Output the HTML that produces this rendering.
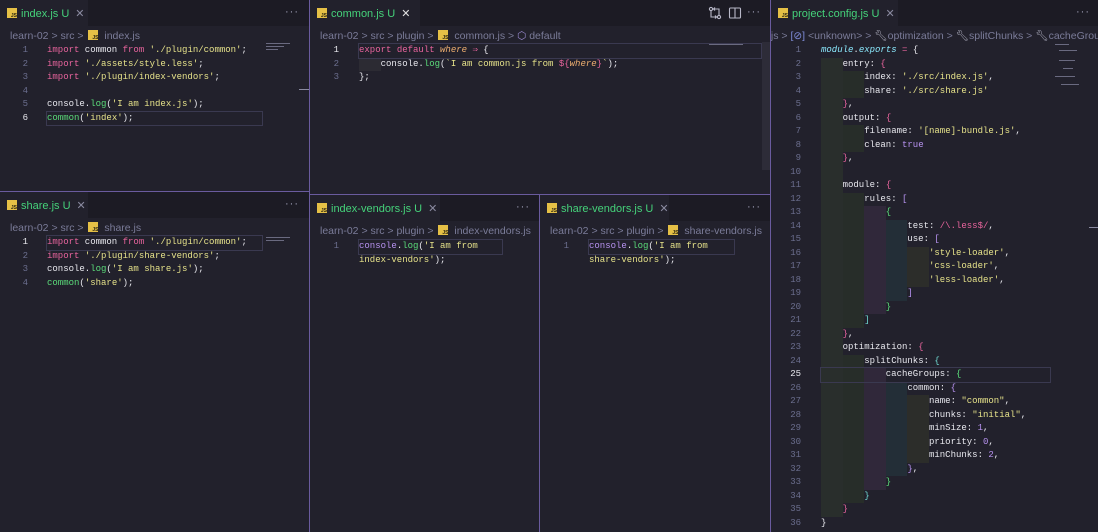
<!DOCTYPE html>
<html><head><meta charset="utf-8"><style>
*{margin:0;padding:0;box-sizing:border-box}
body{width:1098px;height:532px;background:#22212c;position:relative;overflow:hidden;font-family:"Liberation Sans",sans-serif}
.pane{position:absolute;background:#22212c;overflow:hidden}
.tabs{position:absolute;left:0;top:0;right:0;height:26px;background:#1c1b24}
.tab{position:absolute;left:0;top:0;height:26px;background:#22212c;font-size:11px;color:#45d27a;line-height:28px;padding-left:21px;white-space:nowrap}
.tab .x{color:#8a8aa0;margin-left:6px;font-size:11px}
.tab .x.w{color:#e0e0e0}
.js{position:absolute;width:10px;height:10px;background:#e5c046;}
.js:after{content:"JS";position:absolute;right:0;bottom:-1px;font-size:5px;font-weight:bold;color:#2a2410;line-height:6px}
.tab .js{left:7px;top:8px}
.dots{position:absolute;top:0;height:26px;line-height:24px;color:#a0a0b8;font-size:11px;letter-spacing:1px}
.bc{position:absolute;left:10px;top:28px;height:15px;font-size:10.5px;color:#7b7c99;line-height:16px;white-space:nowrap}
.bc .js{position:relative;display:inline-block;top:1px;margin:0 3px 0 2px}
.code{position:absolute;top:44px;left:0;right:0;font-family:"Liberation Mono",monospace;font-size:9px;line-height:13.5px;white-space:normal;color:#e8e8ee}
.src>div{white-space:pre;height:13.5px}
.ln{position:absolute;left:0;text-align:right;color:#6b6e8e}
.ln div.a{color:#e8e8ee}
.src{position:absolute}
.k{color:#e8649d}.s{color:#e6e28a}.f{color:#5bdc7a}.n{color:#b792f0}.it{font-style:italic;color:#f0b070}
.cur{outline:1px solid #3a3950}
.vb{position:absolute;background:#6a5b9e}
i{display:inline-block;width:21.6px;height:13.5px;vertical-align:top}
.l1{background:#292e2c}.l2{background:#272d29}.l3{background:#30283a}.l4{background:#232e37}.l5{background:#2c2d2a}
.mm{position:absolute;height:1px;background:#6a6a80}
</style></head><body>

<div class="pane" style="left:0;top:0;width:309px;height:191px">
  <div class="tabs"></div>
  <div class="tab" style="width:88px"><span class="js"></span>index.js U<span class="x">✕</span></div>
  <div class="dots" style="left:285px">···</div>
  <div class="bc">learn-02 &gt; src &gt; <span class="js"></span> index.js</div>
  <div class="code">
    <div class="ln" style="width:28px"><div>1</div><div>2</div><div>3</div><div>4</div><div>5</div><div class="a">6</div></div>
    <div class="src" style="left:47px"><div><span class="k">import</span> common <span class="k">from</span> <span class="s">'./plugin/common'</span>;</div><div><span class="k">import</span> <span class="s">'./assets/style.less'</span>;</div><div><span class="k">import</span> <span class="s">'./plugin/index-vendors'</span>;</div><div> </div><div>console.<span class="f">log</span>(<span class="s">'I am index.js'</span>);</div><div class="cur" style="width:215px"><span class="f">common</span>(<span class="s">'index'</span>);</div></div>
  </div>
  <div class="mm" style="left:266px;top:43px;width:24px"></div><div class="mm" style="left:266px;top:46px;width:18px"></div><div class="mm" style="left:266px;top:49px;width:12px"></div>
  <div style="position:absolute;left:299px;top:89px;width:10px;height:1px;background:#8a8aa0"></div>
</div>
<div class="vb" style="left:0;top:191px;width:309px;height:1px"></div>

<div class="pane" style="left:0;top:192px;width:309px;height:340px">
  <div class="tabs"></div>
  <div class="tab" style="width:88px"><span class="js"></span>share.js U<span class="x">✕</span></div>
  <div class="dots" style="left:285px">···</div>
  <div class="bc">learn-02 &gt; src &gt; <span class="js"></span> share.js</div>
  <div class="code">
    <div class="ln" style="width:28px"><div class="a">1</div><div>2</div><div>3</div><div>4</div></div>
    <div class="src" style="left:47px"><div class="cur" style="width:215px"><span class="k">import</span> common <span class="k">from</span> <span class="s">'./plugin/common'</span>;</div><div><span class="k">import</span> <span class="s">'./plugin/share-vendors'</span>;</div><div>console.<span class="f">log</span>(<span class="s">'I am share.js'</span>);</div><div><span class="f">common</span>(<span class="s">'share'</span>);</div></div>
  </div>
  <div class="mm" style="left:266px;top:45px;width:24px"></div><div class="mm" style="left:266px;top:48px;width:18px"></div>
</div>

<div class="vb" style="left:309px;top:0;width:1px;height:532px"></div>

<div class="pane" style="left:310px;top:0;width:460px;height:194px">
  <div class="tabs"></div>
  <div class="tab" style="width:110px"><span class="js"></span>common.js U<span class="x w">✕</span></div>
  <svg style="position:absolute;left:398px;top:6px" width="14" height="14" viewBox="0 0 14 14" fill="none" stroke="#b8b8c8" stroke-width="1.1"><circle cx="3" cy="3" r="1.6"/><circle cx="11" cy="11" r="1.6"/><path d="M3 4.6V11h5M11 9.4V3H6M7 9.5 8.5 11 7 12.5M7 1.5 5.5 3 7 4.5"/></svg>
  <svg style="position:absolute;left:418px;top:6px" width="14" height="14" viewBox="0 0 14 14" fill="none" stroke="#b8b8c8" stroke-width="1.1"><rect x="1.5" y="2" width="11" height="10" rx="1"/><path d="M7 2v10"/></svg>
  <div class="dots" style="left:437px">···</div>
  <div class="bc">learn-02 &gt; src &gt; plugin &gt; <span class="js"></span> common.js &gt; <span style="color:#9a8ad0">⬡</span> default</div>
  <div class="code">
    <div class="ln" style="width:29px"><div class="a">1</div><div>2</div><div>3</div></div>
    <div class="src" style="left:49px"><div class="cur" style="width:402px"><span class="k">export</span> <span class="k">default</span> <span class="it">where</span> <span class="k">⇒</span> {</div><div><i style="background:#2c2b33"></i>console.<span class="f">log</span>(<span class="s">`I am common.js from </span><span class="k">${</span><span class="it">where</span><span class="k">}</span><span class="s">`</span>);</div><div>};</div></div>
  </div>
  <div class="mm" style="left:399px;top:44px;width:34px"></div>
  <div style="position:absolute;left:452px;top:42px;width:8px;height:128px;background:#2d2c38"></div>
</div>
<div class="vb" style="left:310px;top:194px;width:460px;height:1px"></div>

<div class="pane" style="left:310px;top:195px;width:229px;height:337px">
  <div class="tabs"></div>
  <div class="tab" style="width:130px"><span class="js"></span>index-vendors.js U<span class="x">✕</span></div>
  <div class="dots" style="left:206px">···</div>
  <div class="bc">learn-02 &gt; src &gt; plugin &gt; <span class="js"></span> index-vendors.js</div>
  <div class="code" style="top:45px">
    <div class="ln" style="width:29px"><div>1</div></div>
    <div class="src" style="left:49px"><div class="cur" style="width:143px"><span class="n">console</span>.<span class="f">log</span>(<span class="s">'I am from</span></div><div><span class="s">index-vendors'</span>);</div></div>
  </div>
</div>
<div class="vb" style="left:539px;top:195px;width:1px;height:337px"></div>

<div class="pane" style="left:540px;top:195px;width:230px;height:337px">
  <div class="tabs"></div>
  <div class="tab" style="width:129px"><span class="js"></span>share-vendors.js U<span class="x">✕</span></div>
  <div class="dots" style="left:207px">···</div>
  <div class="bc">learn-02 &gt; src &gt; plugin &gt; <span class="js"></span> share-vendors.js</div>
  <div class="code" style="top:45px">
    <div class="ln" style="width:29px"><div>1</div></div>
    <div class="src" style="left:49px"><div class="cur" style="width:145px"><span class="n">console</span>.<span class="f">log</span>(<span class="s">'I am from</span></div><div><span class="s">share-vendors'</span>);</div></div>
  </div>
</div>

<div class="vb" style="left:770px;top:0;width:1px;height:532px"></div>

<div class="pane" style="left:771px;top:0;width:327px;height:532px">
  <div class="tabs"></div>
  <div class="tab" style="width:127px"><span class="js"></span>project.config.js U<span class="x">✕</span></div>
  <div class="dots" style="left:305px">···</div>
  <div class="bc" style="left:-3px">.js &gt; <span style="color:#7f8cd8">[⊘]</span> &lt;unknown&gt; &gt; <span style="color:#b0b0c0">🔧︎</span>optimization &gt; <span style="color:#b0b0c0">🔧︎</span>splitChunks &gt; <span style="color:#b0b0c0">🔧︎</span>cacheGroups</div>
  <div class="code">
    <div class="ln" style="width:30px"><div>1</div><div>2</div><div>3</div><div>4</div><div>5</div><div>6</div><div>7</div><div>8</div><div>9</div><div>10</div><div>11</div><div>12</div><div>13</div><div>14</div><div>15</div><div>16</div><div>17</div><div>18</div><div>19</div><div>20</div><div>21</div><div>22</div><div>23</div><div>24</div><div class="a">25</div><div>26</div><div>27</div><div>28</div><div>29</div><div>30</div><div>31</div><div>32</div><div>33</div><div>34</div><div>35</div><div>36</div></div>
    <div class="src" style="left:50px">
<div><span class="it" style="color:#8be9fd">module</span>.<span class="it" style="color:#8be9fd">exports</span> <span class="k">=</span> {</div>
<div><i class="l1"></i>entry: <span class="k">{</span></div>
<div><i class="l1"></i><i class="l2"></i>index: <span class="s">'./src/index.js'</span>,</div>
<div><i class="l1"></i><i class="l2"></i>share: <span class="s">'./src/share.js'</span></div>
<div><i class="l1"></i><span class="k">}</span>,</div>
<div><i class="l1"></i>output: <span class="k">{</span></div>
<div><i class="l1"></i><i class="l2"></i>filename: <span class="s">'[name]-bundle.js'</span>,</div>
<div><i class="l1"></i><i class="l2"></i>clean: <span class="n">true</span></div>
<div><i class="l1"></i><span class="k">}</span>,</div>
<div><i class="l1"></i></div>
<div><i class="l1"></i>module: <span class="k">{</span></div>
<div><i class="l1"></i><i class="l2"></i>rules: <span class="n">[</span></div>
<div><i class="l1"></i><i class="l2"></i><i class="l3"></i><span class="f">{</span></div>
<div><i class="l1"></i><i class="l2"></i><i class="l3"></i><i class="l4"></i>test: <span class="k">/\.less$/</span>,</div>
<div><i class="l1"></i><i class="l2"></i><i class="l3"></i><i class="l4"></i>use: <span class="n">[</span></div>
<div><i class="l1"></i><i class="l2"></i><i class="l3"></i><i class="l4"></i><i class="l5"></i><span class="s">'style-loader'</span>,</div>
<div><i class="l1"></i><i class="l2"></i><i class="l3"></i><i class="l4"></i><i class="l5"></i><span class="s">'css-loader'</span>,</div>
<div><i class="l1"></i><i class="l2"></i><i class="l3"></i><i class="l4"></i><i class="l5"></i><span class="s">'less-loader'</span>,</div>
<div><i class="l1"></i><i class="l2"></i><i class="l3"></i><i class="l4"></i><span class="n">]</span></div>
<div><i class="l1"></i><i class="l2"></i><i class="l3"></i><span class="f">}</span></div>
<div><i class="l1"></i><i class="l2"></i><span style="color:#6fd8d0">]</span></div>
<div><i class="l1"></i><span class="k">}</span>,</div>
<div><i class="l1"></i>optimization: <span class="k">{</span></div>
<div><i class="l1"></i><i class="l2"></i>splitChunks: <span style="color:#6fd8d0">{</span></div>
<div class="cur" style="width:229px"><i class="l1"></i><i class="l2"></i><i class="l3"></i>cacheGroups: <span class="f">{</span></div>
<div><i class="l1"></i><i class="l2"></i><i class="l3"></i><i class="l4"></i>common: <span class="n">{</span></div>
<div><i class="l1"></i><i class="l2"></i><i class="l3"></i><i class="l4"></i><i class="l5"></i>name: <span class="s">"common"</span>,</div>
<div><i class="l1"></i><i class="l2"></i><i class="l3"></i><i class="l4"></i><i class="l5"></i>chunks: <span class="s">"initial"</span>,</div>
<div><i class="l1"></i><i class="l2"></i><i class="l3"></i><i class="l4"></i><i class="l5"></i>minSize: <span class="n">1</span>,</div>
<div><i class="l1"></i><i class="l2"></i><i class="l3"></i><i class="l4"></i><i class="l5"></i>priority: <span class="n">0</span>,</div>
<div><i class="l1"></i><i class="l2"></i><i class="l3"></i><i class="l4"></i><i class="l5"></i>minChunks: <span class="n">2</span>,</div>
<div><i class="l1"></i><i class="l2"></i><i class="l3"></i><i class="l4"></i><span class="n">}</span>,</div>
<div><i class="l1"></i><i class="l2"></i><i class="l3"></i><span class="f">}</span></div>
<div><i class="l1"></i><i class="l2"></i><span style="color:#6fd8d0">}</span></div>
<div><i class="l1"></i><span class="k">}</span></div>
<div>}</div>
    </div>
  </div>
  <div class="mm" style="left:284px;top:44px;width:14px"></div><div class="mm" style="left:288px;top:50px;width:18px"></div><div class="mm" style="left:288px;top:60px;width:16px"></div><div class="mm" style="left:292px;top:68px;width:10px"></div><div class="mm" style="left:284px;top:76px;width:20px"></div><div class="mm" style="left:290px;top:84px;width:18px"></div>
  <div style="position:absolute;left:318px;top:227px;width:9px;height:1px;background:#8a8aa0"></div>
</div>
</body></html>
